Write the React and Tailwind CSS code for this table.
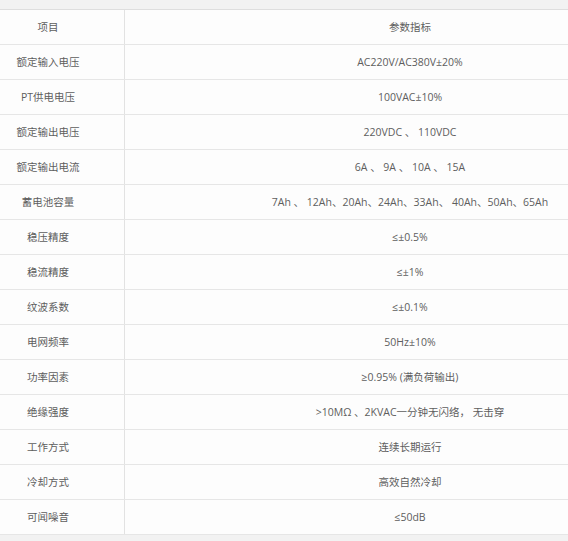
const rows = [
  ["额定输入电压", "AC220V/AC380V±20%"],
  ["PT供电电压", "100VAC±10%"],
  ["额定输出电压", "220VDC 、 110VDC"],
  ["额定输出电流", "6A 、 9A 、 10A 、 15A"],
  ["蓄电池容量", "7Ah 、 12Ah、20Ah、24Ah、33Ah、 40Ah、50Ah、65Ah"],
  ["稳压精度", "≤±0.5%"],
  ["稳流精度", "≤±1%"],
  ["纹波系数", "≤±0.1%"],
  ["电网频率", "50Hz±10%"],
  ["功率因素", "≥0.95% (满负荷输出)"],
  ["绝缘强度", ">10MΩ 、2KVAC一分钟无闪络， 无击穿"],
  ["工作方式", "连续长期运行"],
  ["冷却方式", "高效自然冷却"],
  ["可闻噪音", "≤50dB"],
];

const App = () => {
  return (
    <div
      className="min-h-screen bg-[#f2f2f2] pt-[9px] overflow-hidden text-[10.5px] text-[#5e5e5e]"
      style={{ fontFamily: '"Open Sans", "Noto Sans CJK SC", sans-serif' }}
    >
      <div className="ml-[-28px] w-[723px] bg-[#fdfdfd] border-t border-[#dedede]">
        {/* header */}
        <div className="grid grid-cols-[153px_1fr] h-[35px] border-b border-[#e6e6e6]">
          <div className="flex items-center justify-center pt-[1px] border-r border-[#e2e2e2]">
            项目
          </div>
          <div className="flex items-center justify-center pt-[1px]">参数指标</div>
        </div>

        {rows.map(([name, value]) => (
          <div
            key={name}
            className="grid grid-cols-[153px_1fr] h-[35px] border-b border-[#e6e6e6]"
          >
            <div className="flex items-center justify-center pt-[1px] border-r border-[#e2e2e2]">
              {name}
            </div>
            <div className="flex items-center justify-center pt-[1px] whitespace-pre">
              {value}
            </div>
          </div>
        ))}
      </div>
    </div>
  );
};

export default App;
